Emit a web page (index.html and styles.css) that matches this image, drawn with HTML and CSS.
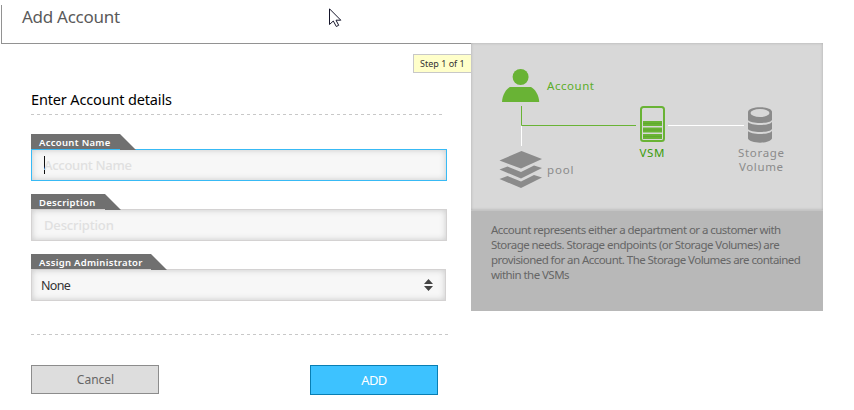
FILE: index.html
```html
<!DOCTYPE html>
<html lang="en">
<head>
<meta charset="utf-8">
<title>Add Account</title>
<link rel="stylesheet" href="styles.css">
</head>
<body>
<header class="header"><h1 class="title">Add Account</h1></header>
<main class="content">
  <form class="form">
    <div class="step">Step 1 of 1</div>
    <h2 class="subtitle">Enter Account details</h2>
    <div class="field field-name">
      <label class="tag">Account Name</label>
      <div class="input focused"><span class="caret"></span><span class="placeholder">Account Name</span></div>
    </div>
    <div class="field field-desc">
      <label class="tag">Description</label>
      <div class="input"><span class="placeholder ph-desc">Description</span></div>
    </div>
    <div class="field field-admin">
      <label class="tag">Assign Administrator</label>
      <div class="input select"><span class="value">None</span>
        <svg class="arrows" width="9" height="12" viewBox="0 0 9 12"><path d="M4.5 0L9 5H0zM0 7h9L4.500 12z" fill="#444"/></svg>
      </div>
    </div>
    <div class="actions">
      <button type="button" class="button cancel"><span>Cancel</span></button>
      <button type="button" class="button add"><span>ADD</span></button>
    </div>
  </form>
  <aside class="panel">
    <svg class="diagram" width="352" height="167" viewBox="471 43 352 167">
      <g fill="#69b335">
        <circle cx="520.6" cy="77" r="8"/>
        <path d="M502 102c.3-7 4-13 8-15h21c4 2 8 8 8.200 15z"/>
      </g>
      <path d="M521.500 125v21M668 125.500h76" stroke="#fff" fill="none"/>
      <path d="M521.500 106v19.500H636" stroke="#69b335" fill="none"/>
      <g fill="#8b8b8b">
        <path d="M521.500 151L542 159 521 168.500 499.500 160.500z"/>
        <path d="M499.500 169.500l8-3 13.500 5.500 13-6.500 8 2.500-21 10.500z"/>
        <path d="M499.500 179l8-3 13.500 5.500 13-6.500 8 2.500-21 10.500z"/>
      </g>
      <rect x="641" y="107" width="23" height="34" rx="2.500" fill="none" stroke="#69b335" stroke-width="2"/>
      <path d="M643 121h19v5h-19zM643 127.500h19v5h-19zM643 134h19v5h-19z" fill="#69b335"/>
      <path d="M643 123.500h19M643 130h19M643 136.500h19" stroke="#5aa32b" stroke-width=".6" fill="none"/>
      <g fill="#8b8b8b">
        <path d="M748 112c0-6.500 24-6.500 24 0v8c-2 4-22 4-24 0z"/>
        <path d="M748 122c3 4 21 4 24 0v7c-2 4-22 4-24 0z"/>
        <path d="M748 131c3 4 21 4 24 0v7.500c-2 5.500-22 5.500-24 0z"/>
      </g>
      <ellipse cx="760" cy="113" rx="9.500" ry="4" fill="#d8d8d8"/>
      <g class="node-label">
        <text class="green" x="547" y="90" textLength="47">Account</text>
        <text class="green vsm" x="639.500" y="157" textLength="25">VSM</text>
        <text x="547" y="174" textLength="26.500">pool</text>
        <text x="738" y="157" textLength="46">Storage</text>
        <text x="739" y="171" textLength="44">Volume</text>
      </g>
    </svg>
    <div class="description">
      <div class="l1">Account represents either a department or a customer with</div>
      <div class="l2">Storage needs. Storage endpoints (or Storage Volumes) are</div>
      <div class="l3">provisioned for an Account. The Storage Volumes are contained</div>
      <div class="l4">within the VSMs</div>
    </div>
  </aside>
</main>
<svg class="cursor" width="13" height="20" viewBox="0 0 13 20"><path d="M.5.800V16.500L4.300 13l3 5.500 2.400-1.200L7 12.200h4.800z" fill="#fff" stroke="#15152a"/></svg>
</body>
</html>
```
FILE: styles.css
```css
* { box-sizing: border-box; }
body {
  margin: 0;
  width: 854px;
  height: 410px;
  overflow: hidden;
  background: #fff;
  font-family: "Noto Sans", sans-serif;
  white-space: nowrap;
}
.header {
  width: 470px;
  height: 39px;
  margin: 5px 0 0 1px;
  border-left: 1px solid #929292;
  border-bottom: 1px solid #929292;
}
.title {
  margin: 0;
  padding-left: 20px;
  font-size: 17px;
  font-weight: 400;
  line-height: 24px;
  letter-spacing: -0.270px;
  color: #5a5a5a;
}
.content { display: flex; margin-top: -1px; }
.form {
  display: flex;
  flex-direction: column;
  width: 471px;
  padding: 11px 0 0 31px;
}
.step {
  align-self: flex-end;
  width: 58px;
  height: 19px;
  padding-left: 6px;
  border: 1px solid #c8c8c8;
  border-right: 0;
  background: #ffffca;
  font-size: 9px;
  line-height: 18px;
  color: #333;
}
.subtitle {
  width: 414px;
  height: 42px;
  margin: 0 0 19px;
  padding-top: 16px;
  font-size: 14.500px;
  font-weight: 400;
  line-height: 20px;
  letter-spacing: -0.150px;
  color: #000;
  background: repeating-linear-gradient(90deg, #c8c8c8 0 3px, transparent 3px 6px) 0 100% / 100% 1px no-repeat;
}
.field { width: 416px; height: 47px; margin-bottom: 13px; }
.tag {
  display: block;
  position: relative;
  z-index: 1;
  width: 105px;
  height: 16px;
  margin-bottom: -1px;
  padding-left: 8px;
  background: #707070;
  clip-path: polygon(0 0, calc(100% - 16px) 0, 100% 100%, calc(100% - 16px) 100%, calc(100% - 16px) 15px, 0 15px);
  font-size: 9.500px;
  font-weight: 600;
  line-height: 17px;
  letter-spacing: 0.300px;
  color: #fff;
}
.field-desc .tag { width: 90px; }
.field-admin .tag { width: 136px; }
.input {
  display: flex;
  align-items: center;
  height: 32px;
  padding-left: 12px;
  border: 1px solid #d4d2d2;
  background: #f7f7f7;
  box-shadow: inset 0 0 6px #c8c8c8;
}
.focused { border-color: #38baf5; }
.caret { width: 1px; height: 18px; background: #111; }
.placeholder {
  margin-left: -1px;
  font-size: 13px;
  font-weight: 500;
  letter-spacing: -0.300px;
  color: #e0e0e0;
}
.ph-desc { margin-left: 0; letter-spacing: -0.150px; }
.select { width: 415px; padding: 0 12px 0 9px; justify-content: space-between; }
.value { font-size: 12.500px; letter-spacing: -0.700px; color: #333; }
.actions {
  display: flex;
  justify-content: space-between;
  width: 417px;
  height: 61px;
  margin-top: 20px;
  padding: 31px 10px 0 0;
  background: repeating-linear-gradient(90deg, #c8c8c8 0 3px, transparent 3px 6px) 0 0 / 100% 1px no-repeat;
}
.button {
  width: 128px;
  height: 29px;
  padding: 0;
  border: 1px solid #8c8c8c;
  background: #ddd;
  font: 12px "Noto Sans", sans-serif;
  color: #666;
}
.cancel { padding-left: 1px; }
.add { height: 30px; border-color: #087eb3; background: #3dc2ff; color: #fff; font-size: 13px; letter-spacing: -0.600px; }
.panel { width: 352px; height: 268px; background: #b8b8b8; }
.diagram { display: block; background: #d8d8d8; box-shadow: inset 0 0 3px #aaa; }
.node-label { font-size: 11.500px; fill: #8b8b8b; }
.node-label .green { fill: #5bad29; }
.node-label .vsm { fill: #3a9c0a; }
.description {
  height: 101px;
  padding: 11px 0 0 20px;
  border-top: 1px solid #c4c4c4;
  font-size: 11.500px;
  line-height: 15px;
  letter-spacing: -0.550px;
  color: #666;
}
.cursor { position: absolute; left: 329px; top: 8px; }
```
